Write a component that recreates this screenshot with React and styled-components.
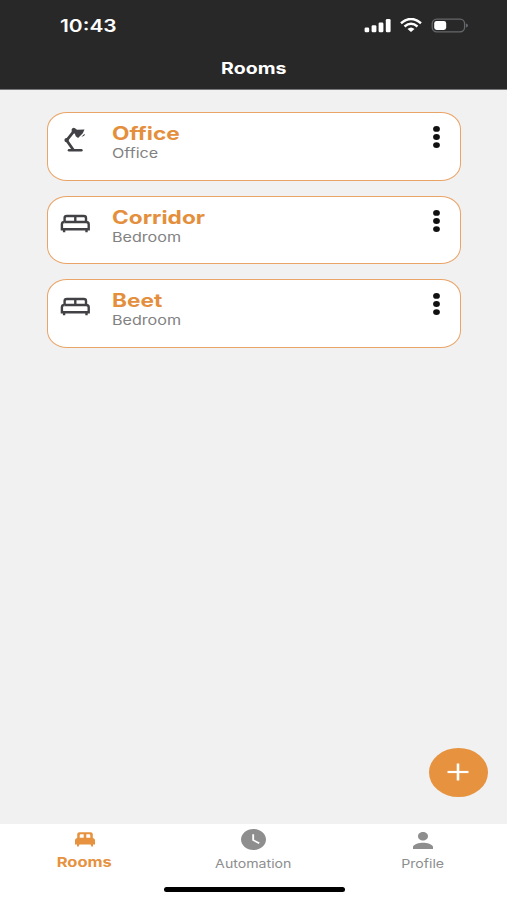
import React from 'react';
import styled, { createGlobalStyle } from 'styled-components';
import { MdPerson, MdWatchLater } from 'react-icons/md';

const GlobalStyle = createGlobalStyle`
    * {
        box-sizing: border-box;
    }

    body {
        margin: 0;
        font-family: Inter, 'Liberation Sans', sans-serif;
    }
`

const Screen = styled.div`
    display: flex;
    flex-direction: column;
    width: 507px;
    height: 900px;
    overflow: hidden;
    background: #f1f1f1;
`

const Header = styled.header`
    height: 90px;
    background: #282828;
    border-bottom: 1px solid #77777a;
    color: #fff;
`

const StatusBar = styled.div`
    display: flex;
    justify-content: space-between;
    align-items: center;
    height: 50px;
    padding: 1px 38px 0 60px;
`

const StatusIcons = styled.div`
    display: flex;
    align-items: center;
    gap: 9px;

    svg {
        display: block;
    }
`

// wide lettering, stretched from its left edge or its centre
const Text = styled.span`
    display: block;
    width: max-content;
    white-space: nowrap;
    font-size: ${props => props.$size}px;
    font-weight: ${props => props.$weight || 400};
    line-height: ${props => props.$line || 20}px;
    color: ${props => props.$color || 'inherit'};
    transform: scaleX(${props => props.$stretch || 1.22});
    transform-origin: ${props => props.$origin || 'left'} center;
`

const Title = styled.h1`
    display: flex;
    justify-content: center;
    margin: 8px 0 0;
    padding-left: 1px;
`

const List = styled.main`
    display: flex;
    flex: 1;
    flex-direction: column;
    gap: 15px;
    padding: 22px 46px 0 47px;
`

const Card = styled.article`
    display: flex;
    height: 68.6px;
    padding: 0 19px 0 12px;
    background: #fff;
    border: 1.4px solid #e9a468;
    border-radius: 20px / 17px;
`

const RoomIcon = styled.div`
    width: 52px;
    padding-top: 12px;

    svg {
        display: block;
    }
`

const RoomInfo = styled.div`
    flex: 1;
    padding-top: 10px;
`

const MenuButton = styled.button`
    align-self: flex-start;
    margin: 12px 0 0;
    padding: 0;
    border: none;
    background: none;

    svg {
        display: block;
    }
`

const AddRow = styled.div`
    display: flex;
    justify-content: flex-end;
    padding: 0 19px 27px 0;
`

const AddButton = styled.button`
    display: flex;
    align-items: center;
    justify-content: center;
    width: 59px;
    height: 49px;
    padding: 0 1px 1px 0;
    border: none;
    border-radius: 50%;
    background: #e6923f;
`

const TabBar = styled.nav`
    display: grid;
    grid-template-columns: repeat(3, 1fr);
    height: 62px;
    background: #fff;
`

const Tab = styled.div`
    display: flex;
    flex-direction: column;
    align-items: center;
    color: ${props => props.$active ? '#e6923f' : '#8e8e8f'};
`

const TabIcon = styled.div`
    display: flex;
    align-items: center;
    height: ${props => props.$height || 31}px;
`

const ClockIcon = styled(MdWatchLater)`
    width: 25px;
    height: 21px;
`

const PersonIcon = styled(MdPerson)`
    width: 20px;
    height: 17px;
    margin-top: 2px;
`

const HomeArea = styled.div`
    display: flex;
    justify-content: center;
    height: 14px;
    background: #fff;
`

const HomeIndicator = styled.div`
    width: 181px;
    height: 5px;
    margin: 1px 0 0 1px;
    border-radius: 3px;
    background: #000;
`

const Signal = () => (
    <svg width="27" height="15" viewBox="0 0 27 15" fill="#fff">
        <rect x="0.6" y="9.4" width="4.6" height="4.8" rx="1.3" />
        <rect x="7.6" y="7.2" width="4.8" height="7" rx="1.3" />
        <rect x="14.6" y="4.4" width="4.8" height="9.8" rx="1.3" />
        <rect x="21.8" y="1" width="4.8" height="13.2" rx="1.3" />
    </svg>
)

const Wifi = () => (
    <svg width="22" height="15" viewBox="0 0 22 15" fill="none" stroke="#fff">
        <path d="M1 5.2Q11-3.2 21 5.2" strokeWidth="2.5" />
        <path d="M4.5 8.5Q11 3 17.5 8.5" strokeWidth="2.4" />
        <path d="M7.5 11Q11 8 14.5 11L11 14Z" fill="#fff" stroke="none" />
    </svg>
)

const Battery = () => (
    <svg width="38" height="15" viewBox="0 0 38 15">
        <rect x="1.2" y="1.2" width="32.4" height="12.6" rx="4.5" fill="none" stroke="#66676a" strokeWidth="1.3" />
        <rect x="3.2" y="3" width="12" height="9" rx="2.4" fill="#fff" />
        <path d="M35 5.5Q37 6.1 37 7.5T35 9.5Z" fill="#66676a" />
    </svg>
)

const Lamp = () => (
    <svg width="30" height="28" viewBox="0 0 30 28" fill="#424246">
        <path d="M9 25.2H21.4" fill="none" stroke="#424246" strokeWidth="2.5" strokeLinecap="round" />
        <path d="M13.4 25L6.6 15.3L13.2 7.2" fill="none" stroke="#424246" strokeWidth="2.8" strokeLinejoin="round" />
        <circle cx="6.6" cy="15.1" r="2.2" />
        <path d="M11.6 4.6Q12.6 1.9 15 3.2L17 4.7L24.5 4.6L22.8 8.2L18.1 13.1L15.7 11.2L14.9 8.8L11.8 7.2Z" />
        <path d="M21.4 11.8L24.6 8.8Q25.4 11.2 21.4 11.8Z" />
    </svg>
)

const Bed = () => (
    <svg width="30" height="28" viewBox="0 0 30 28" fill="none" stroke="#424246" strokeWidth="2.4">
        <path d="M4.6 13V9Q4.6 7 6.8 7H23.8Q26 7 26 9V13" />
        <path d="M15.3 7V13M4.6 13H26" />
        <path d="M4.6 13Q1.9 13 1.9 15.2V20.2H28.7V15.2Q28.7 13 26 13" />
        <path d="M4.1 20V23.2M26.5 20V23.2" />
    </svg>
)

const BedSolid = () => (
    <svg width="20" height="15" viewBox="0 0 20 15" fill="currentColor">
        <path fillRule="evenodd" d="M2.2 6V2.3Q2.2 0.2 4.4 0.2H15.6Q17.8 0.2 17.8 2.3V6Q20 6.4 20 8.2V12.5H18V14.5H16.4L15.6 12.5H4.4L3.6 14.5H2V12.5H0V8.2Q0 6.4 2.2 6ZM5.8 2.2Q4.7 2.2 4.7 3.4V5.8H8.7V2.2ZM11.3 2.2V5.8H15.3V3.4Q15.3 2.2 14.2 2.2Z" />
    </svg>
)

const Dots = () => (
    <svg width="9" height="25" viewBox="0 0 9 25" fill="#111">
        <ellipse cx="4.5" cy="3.9" rx="3.4" ry="2.9" />
        <ellipse cx="4.5" cy="12" rx="3.4" ry="2.9" />
        <ellipse cx="4.5" cy="20.1" rx="3.4" ry="2.9" />
    </svg>
)

const rooms = [
    { name: 'Office', type: 'Office', icon: Lamp },
    { name: 'Corridor', type: 'Bedroom', icon: Bed },
    { name: 'Beet', type: 'Bedroom', icon: Bed },
]

const RoomCard = ({ room }) => {
    const Icon = room.icon;
    return (
        <Card>
            <RoomIcon><Icon /></RoomIcon>
            <RoomInfo>
                <Text $size={18.5} $weight={700} $stretch={1.225} $color="#e48f3d">{room.name}</Text>
                <Text $size={13} $stretch={1.24} $color="#828282">{room.type}</Text>
            </RoomInfo>
            <MenuButton aria-label="Options"><Dots /></MenuButton>
        </Card>
    )
}

const App = () => (
    <Screen>
        <GlobalStyle />
        <Header>
            <StatusBar>
                <Text $size={17.2} $weight={600}>10:43</Text>
                <StatusIcons>
                    <Signal />
                    <Wifi />
                    <Battery />
                </StatusIcons>
            </StatusBar>
            <Title><Text $size={16} $weight={700} $origin="center" $stretch={1.22}>Rooms</Text></Title>
        </Header>
        <List>
            {rooms.map(room => <RoomCard key={room.name} room={room} />)}
        </List>
        <AddRow>
            <AddButton aria-label="Add room">
                <svg width="22" height="18" viewBox="0 0 22 18" stroke="#fff">
                    <path d="M11 0.5V17.5" strokeWidth="2.6" />
                    <path d="M0.5 9H21.5" strokeWidth="2.2" />
                </svg>
            </AddButton>
        </AddRow>
        <TabBar>
            <Tab $active>
                <TabIcon $height={30}><BedSolid /></TabIcon>
                <Text $size={13.3} $weight={700} $origin="center" $line={16} $stretch={1.24}>Rooms</Text>
            </Tab>
            <Tab>
                <TabIcon>
                    <ClockIcon viewBox="2 2 20 20" preserveAspectRatio="none" />
                </TabIcon>
                <Text $size={11.6} $origin="center" $line={18} $stretch={1.22}>Automation</Text>
            </Tab>
            <Tab>
                <TabIcon>
                    <PersonIcon viewBox="4 4 16 16" preserveAspectRatio="none" />
                </TabIcon>
                <Text $size={11.6} $origin="center" $line={18} $stretch={1.22}>Profile</Text>
            </Tab>
        </TabBar>
        <HomeArea><HomeIndicator /></HomeArea>
    </Screen>
)

export default App
